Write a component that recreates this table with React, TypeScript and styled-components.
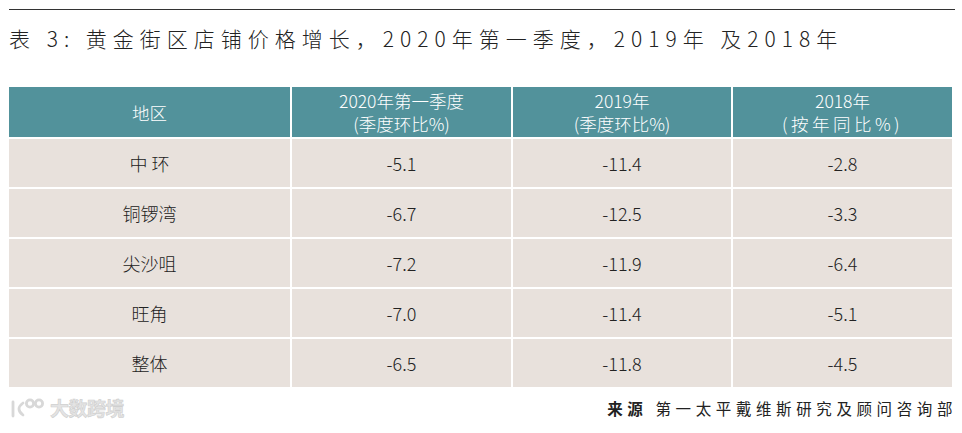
import styled, { createGlobalStyle } from "styled-components";

const GlobalStyle = createGlobalStyle`
  html, body {
    margin: 0;
    padding: 0;
    background: #ffffff;
  }
  body {
    font-family: "Noto Sans CJK SC", "Noto Sans", sans-serif;
    color: #222222;
  }
`;

interface rowProps {
  area: string;
  q2020: string;
  y2019: string;
  y2018: string;
}

const rows: rowProps[] = [
  { area: "中 环", q2020: "-5.1", y2019: "-11.4", y2018: "-2.8" },
  { area: "铜锣湾", q2020: "-6.7", y2019: "-12.5", y2018: "-3.3" },
  { area: "尖沙咀", q2020: "-7.2", y2019: "-11.9", y2018: "-6.4" },
  { area: "旺角", q2020: "-7.0", y2019: "-11.4", y2018: "-5.1" },
  { area: "整体", q2020: "-6.5", y2019: "-11.8", y2018: "-4.5" },
];

function Logo() {
  return (
    <svg width="38" height="22" viewBox="0 0 38 22">
      <g fill="none" stroke="#d8d8d8" strokeWidth="2.8" strokeLinecap="round">
        <path d="M4 5 L4 19" />
        <path d="M14 6 Q6 12 14 18" />
        <circle cx="21" cy="6.5" r="3.6" />
        <circle cx="30" cy="6.5" r="3.6" />
      </g>
    </svg>
  );
}

function App() {
  return (
    <Page>
      <GlobalStyle />
      <Rule />
      <Title>表 3: 黄金街区店铺价格增长，2020年第一季度，2019年 及2018年</Title>
      <Table>
        <HeadCell>
          <Label>地区</Label>
        </HeadCell>
        <HeadCell>
          <Label>2020年第一季度</Label>
          <Label>(季度环比%)</Label>
        </HeadCell>
        <HeadCell>
          <Label>2019年</Label>
          <Label>(季度环比%)</Label>
        </HeadCell>
        <HeadCell>
          <Label>2018年</Label>
          <Label $spaced>(按年同比%)</Label>
        </HeadCell>
        {rows.map((r) => (
          <Row key={r.area}>
            <Cell>{r.area}</Cell>
            <Cell>{r.q2020}</Cell>
            <Cell>{r.y2019}</Cell>
            <Cell>{r.y2018}</Cell>
          </Row>
        ))}
      </Table>
      <Footer>
        <Watermark>
          <Logo />
          <span>大数跨境</span>
        </Watermark>
        <Source>
          <b>来源</b> 第一太平戴维斯研究及顾问咨询部
        </Source>
      </Footer>
    </Page>
  );
}

export default App;

const Page = styled.div`
  width: 962px;
  height: 433px;
  padding: 9px 0 0 9px;
  box-sizing: border-box;
  overflow: hidden;
`;

const Rule = styled.div`
  width: 946px;
  height: 1px;
  background: #333333;
`;

const Title = styled.h1`
  margin: 16px 0 0 0;
  height: 61px;
  font-size: 21px;
  font-weight: 300;
  line-height: 24px;
  letter-spacing: 6px;
  color: #222222;
  white-space: nowrap;
`;

const Table = styled.div`
  display: grid;
  grid-template-columns: 281px 219px 218px 219px;
  grid-template-rows: 50px repeat(5, 48px);
  gap: 2px;
  width: 943px;
  background: #ffffff;
`;

const Row = styled.div`
  display: contents;
`;

const HeadCell = styled.div`
  background: #52929b;
  color: #ffffff;
  display: flex;
  flex-direction: column;
  align-items: center;
  justify-content: center;
  text-align: center;
  font-size: 17.5px;
  font-weight: 300;
  line-height: 23px;
`;

const Label = styled.span<{ $spaced?: boolean }>`
  display: block;
  white-space: nowrap;
  letter-spacing: ${(p) => (p.$spaced ? "3.5px" : "0")};
`;

const Cell = styled.div`
  background: #e8e1dc;
  color: #222222;
  display: flex;
  align-items: center;
  justify-content: center;
  font-size: 18px;
  font-weight: 300;
  white-space: pre;
`;

const Footer = styled.div`
  display: flex;
  justify-content: space-between;
  align-items: center;
  width: 944px;
  margin-top: 7px;
`;

const Watermark = styled.div`
  display: flex;
  align-items: center;
  gap: 3px;
  color: #e4e4e4;
  font-size: 19px;
  font-weight: 700;
  letter-spacing: -0.5px;
  -webkit-text-stroke: 0.6px #cfcfcf;
`;

const Source = styled.div`
  font-size: 15.5px;
  font-weight: 400;
  letter-spacing: 4.6px;
  margin-right: -4px;
  color: #222222;

  b {
    font-weight: 700;
  }
`;
